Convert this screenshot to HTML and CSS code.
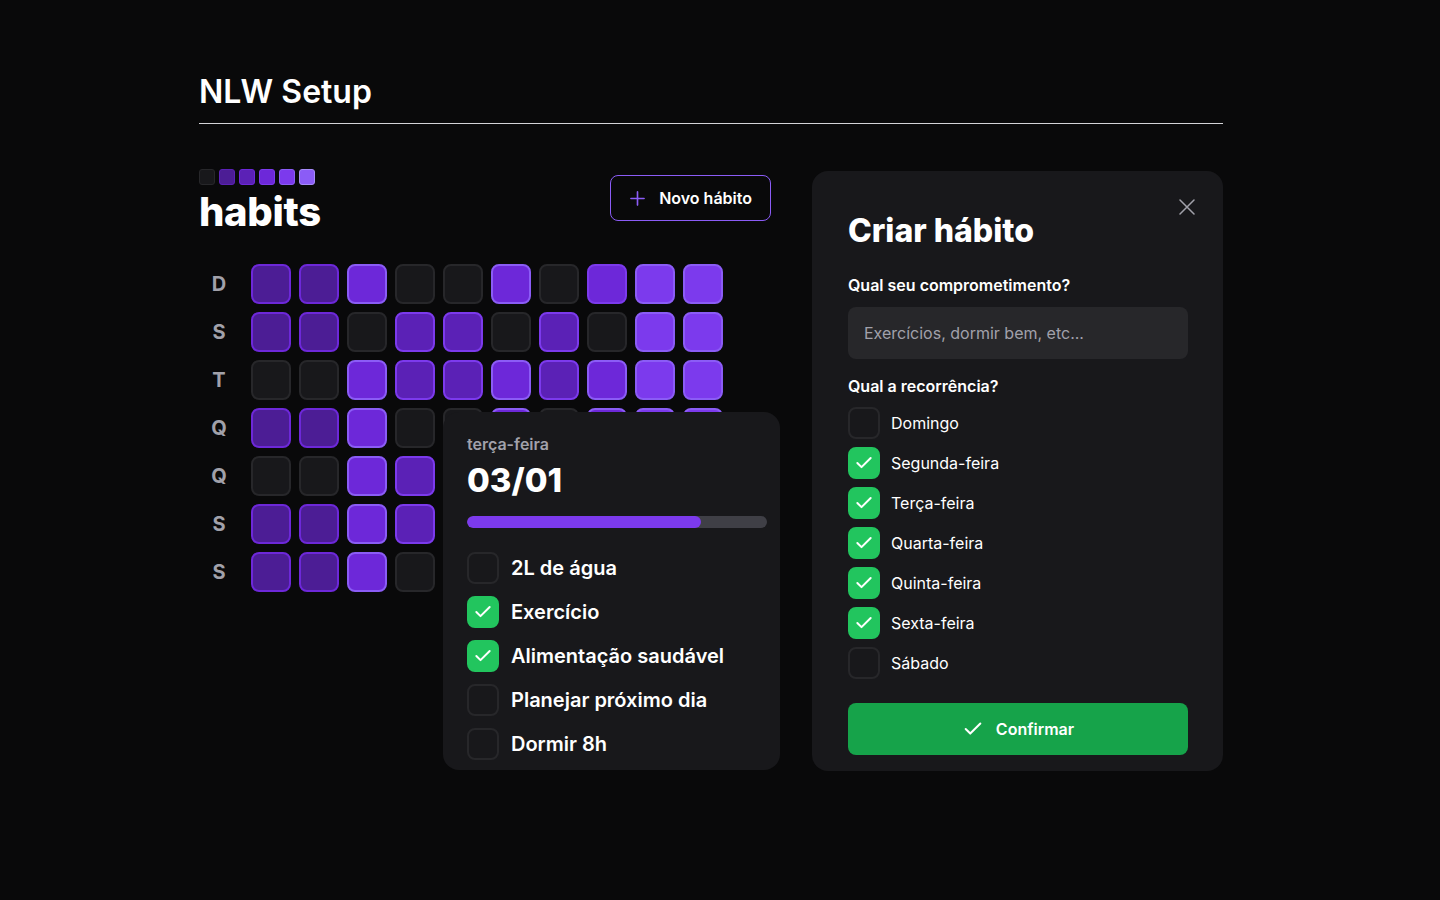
FILE: index.html
```html
<!DOCTYPE html>
<html lang="pt-BR">
<head>
<meta charset="utf-8">
<title>NLW Setup</title>
<link rel="stylesheet" href="styles.css">
</head>
<body>
<div class="page">
  <header class="top-header">
    <h1 class="app-title">NLW Setup</h1>
  </header>

  <main class="main">
    <section class="board">
      <div class="board-head">
        <div class="brand">
          <div class="brand-squares">
            <span class="sq sq-0"></span>
            <span class="sq sq-1"></span>
            <span class="sq sq-2"></span>
            <span class="sq sq-3"></span>
            <span class="sq sq-4"></span>
            <span class="sq sq-5"></span>
          </div>
          <h2 class="brand-name">habits</h2>
        </div>
        <button class="new-btn" type="button">
          <svg class="new-icon" width="15" height="15" viewBox="0 0 16 16" fill="none" stroke="#8b5cf6" stroke-width="1.75" stroke-linecap="round"><path d="M8 1v14M1 8h14"/></svg>
          <span>Novo hábito</span>
        </button>
      </div>

      <div class="summary">
        <div class="week-labels">
          <span>D</span><span>S</span><span>T</span><span>Q</span><span>Q</span><span>S</span><span>S</span>
        </div>
        <div class="cells">
          <span class="c l1"></span><span class="c l1"></span><span class="c l3"></span><span class="c l0"></span><span class="c l0"></span><span class="c l3"></span><span class="c l0"></span><span class="c l3b"></span><span class="c l4"></span><span class="c l4"></span>
          <span class="c l1"></span><span class="c l1"></span><span class="c l0"></span><span class="c l2"></span><span class="c l2"></span><span class="c l0"></span><span class="c l2"></span><span class="c l0"></span><span class="c l4"></span><span class="c l4"></span>
          <span class="c l0"></span><span class="c l0"></span><span class="c l3"></span><span class="c l2"></span><span class="c l2"></span><span class="c l3"></span><span class="c l2"></span><span class="c l3"></span><span class="c l4"></span><span class="c l4"></span>
          <span class="c l1"></span><span class="c l1"></span><span class="c l3"></span><span class="c l0"></span><span class="c l0"></span><span class="c l3"></span><span class="c l0"></span><span class="c l3"></span><span class="c l4"></span><span class="c l4"></span>
          <span class="c l0"></span><span class="c l0"></span><span class="c l3"></span><span class="c l2"></span><span class="c l2"></span><span class="c l3"></span><span class="c l0"></span><span class="c l3"></span><span class="c l4"></span><span class="c l4"></span>
          <span class="c l1"></span><span class="c l1"></span><span class="c l3"></span><span class="c l2"></span><span class="c l0"></span><span class="c l3"></span><span class="c l2"></span><span class="c l0"></span><span class="c l4"></span><span class="c l4"></span>
          <span class="c l1"></span><span class="c l1"></span><span class="c l3"></span><span class="c l0"></span><span class="c l2"></span><span class="c l0"></span><span class="c l3"></span><span class="c l2"></span><span class="c l4"></span><span class="c l4"></span>
        </div>

        <div class="day-popover">
          <span class="day-week">terça-feira</span>
          <span class="day-date">03/01</span>
          <div class="progress"><div class="progress-fill" style="width: 78%"></div></div>
          <ul class="day-list">
            <li class="check-row big"><span class="box"></span><span>2L de água</span></li>
            <li class="check-row big"><span class="box on"><svg width="20" height="20" viewBox="0 0 24 24" fill="none" stroke="#fff" stroke-width="2.4" stroke-linecap="round" stroke-linejoin="round"><path d="M20 6 9 17l-5-5"/></svg></span><span>Exercício</span></li>
            <li class="check-row big"><span class="box on"><svg width="20" height="20" viewBox="0 0 24 24" fill="none" stroke="#fff" stroke-width="2.4" stroke-linecap="round" stroke-linejoin="round"><path d="M20 6 9 17l-5-5"/></svg></span><span>Alimentação saudável</span></li>
            <li class="check-row big"><span class="box"></span><span>Planejar próximo dia</span></li>
            <li class="check-row big"><span class="box"></span><span>Dormir 8h</span></li>
          </ul>
        </div>
      </div>
    </section>

    <section class="modal">
      <button class="close-btn" type="button" aria-label="Fechar">
        <svg width="16" height="16" viewBox="0 0 16 16" fill="none" stroke="#a1a1aa" stroke-width="1.5" stroke-linecap="round"><path d="M1 1l14 14M15 1 1 15"/></svg>
      </button>
      <h3 class="modal-title">Criar hábito</h3>
      <label class="field-label">Qual seu comprometimento?</label>
      <input class="field-input" type="text" placeholder="Exercícios, dormir bem, etc...">
      <label class="field-label second">Qual a recorrência?</label>
      <ul class="week-list">
        <li class="check-row"><span class="box"></span><span>Domingo</span></li>
        <li class="check-row"><span class="box on"><svg width="20" height="20" viewBox="0 0 24 24" fill="none" stroke="#fff" stroke-width="2.4" stroke-linecap="round" stroke-linejoin="round"><path d="M20 6 9 17l-5-5"/></svg></span><span>Segunda-feira</span></li>
        <li class="check-row"><span class="box on"><svg width="20" height="20" viewBox="0 0 24 24" fill="none" stroke="#fff" stroke-width="2.4" stroke-linecap="round" stroke-linejoin="round"><path d="M20 6 9 17l-5-5"/></svg></span><span>Terça-feira</span></li>
        <li class="check-row"><span class="box on"><svg width="20" height="20" viewBox="0 0 24 24" fill="none" stroke="#fff" stroke-width="2.4" stroke-linecap="round" stroke-linejoin="round"><path d="M20 6 9 17l-5-5"/></svg></span><span>Quarta-feira</span></li>
        <li class="check-row"><span class="box on"><svg width="20" height="20" viewBox="0 0 24 24" fill="none" stroke="#fff" stroke-width="2.4" stroke-linecap="round" stroke-linejoin="round"><path d="M20 6 9 17l-5-5"/></svg></span><span>Quinta-feira</span></li>
        <li class="check-row"><span class="box on"><svg width="20" height="20" viewBox="0 0 24 24" fill="none" stroke="#fff" stroke-width="2.4" stroke-linecap="round" stroke-linejoin="round"><path d="M20 6 9 17l-5-5"/></svg></span><span>Sexta-feira</span></li>
        <li class="check-row"><span class="box"></span><span>Sábado</span></li>
      </ul>
      <button class="confirm-btn" type="button">
        <svg width="22" height="22" viewBox="0 0 24 24" fill="none" stroke="#fff" stroke-width="2.2" stroke-linecap="round" stroke-linejoin="round"><path d="M20 6 9 17l-5-5"/></svg>
        <span>Confirmar</span>
      </button>
    </section>
  </main>
</div>
</body>
</html>
```

FILE: styles.css
```css
* { box-sizing: border-box; }

html, body {
  margin: 0;
  padding: 0;
  background: #09090a;
  color: #ffffff;
  font-family: Inter, "Noto Sans", "Liberation Sans", sans-serif;
}

.page {
  width: 1024px;
  margin-left: 199px;
}

.top-header {
  padding-top: 72px;
  padding-bottom: 11px;
  border-bottom: 1px solid #d4d4d8;
}

.app-title {
  margin: 0;
  font-size: 32px;
  line-height: 40px;
  font-weight: 600;
  letter-spacing: 0;
}

.main {
  display: flex;
  align-items: flex-start;
  justify-content: space-between;
  margin-top: 45px;
}

/* ---------- left board ---------- */
.board {
  width: 572px;
}

.board-head {
  display: flex;
  justify-content: space-between;
  align-items: flex-start;
}

.brand-squares {
  display: flex;
  gap: 4px;
}

.sq {
  width: 16px;
  height: 16px;
  border-radius: 3px;
  border: 1px solid;
}
.sq-0 { background: #18181b; border-color: #27272a; }
.sq-1 { background: #4c1d95; border-color: #5b21b6; }
.sq-2 { background: #5b21b6; border-color: #6d28d9; }
.sq-3 { background: #6d28d9; border-color: #7c3aed; }
.sq-4 { background: #7c3aed; border-color: #8b5cf6; }
.sq-5 { background: #8b5cf6; border-color: #a78bfa; }

.brand-name {
  margin: 7px 0 0;
  font-size: 40px;
  line-height: 40px;
  font-weight: 800;
  letter-spacing: -0.3px;
}

.new-btn {
  margin-top: 6px;
  height: 46px;
  display: flex;
  align-items: center;
  gap: 14px;
  padding: 0 18px 0 19px;
  background: transparent;
  border: 1px solid #8b5cf6;
  border-radius: 8px;
  color: #ffffff;
  font-family: inherit;
  font-size: 16px;
  font-weight: 600;
}

.summary {
  position: relative;
  display: flex;
  margin-top: 32px;
}

.week-labels {
  width: 40px;
  margin-right: 12px;
  display: grid;
  grid-template-rows: repeat(7, 40px);
  row-gap: 8px;
}

.week-labels span {
  display: flex;
  align-items: center;
  justify-content: center;
  color: #a1a1aa;
  font-size: 20px;
  font-weight: 700;
}

.cells {
  display: grid;
  grid-template-columns: repeat(10, 40px);
  grid-auto-rows: 40px;
  gap: 8px;
}

.c {
  border-radius: 8px;
  border: 2px solid;
}
.l0 { background: #18181b; border-color: #27272a; }
.l1 { background: #4c1d95; border-color: #6d28d9; }
.l2 { background: #5b21b6; border-color: #7c3aed; }
.l3 { background: #6d28d9; border-color: #8b5cf6; }
.l3b { background: #6d28d9; border-color: #7c3aed; }
.l4 { background: #7c3aed; border-color: #8b5cf6; }

/* popover over the grid */
.day-popover {
  position: absolute;
  top: 148px;
  left: 244px;
  width: 337px;
  padding: 20px 13px 10px 24px;
  background: #18181b;
  border-radius: 16px;
  display: flex;
  flex-direction: column;
}

.day-week {
  color: #a1a1aa;
  font-size: 16px;
  line-height: 24px;
  font-weight: 600;
}

.day-date {
  margin-top: 4px;
  font-size: 33px;
  line-height: 40px;
  font-weight: 800;
}

.progress {
  margin-top: 16px;
  height: 12px;
  width: 300px;
  background: #3f3f46;
  border-radius: 999px;
  overflow: hidden;
}

.progress-fill {
  height: 100%;
  background: #7c3aed;
  border-radius: 999px;
}

.day-list,
.week-list {
  list-style: none;
  margin: 0;
  padding: 0;
  display: flex;
  flex-direction: column;
}

.day-list {
  margin-top: 24px;
  gap: 12px;
}

.check-row {
  display: flex;
  align-items: center;
  gap: 12px;
  font-size: 16px;
  line-height: 24px;
  color: #ffffff;
}

.week-list .check-row {
  gap: 11px;
}

.check-row.big {
  font-size: 20px;
  font-weight: 600;
  line-height: 28px;
}

.box {
  width: 32px;
  height: 32px;
  flex: none;
  border-radius: 8px;
  background: #18181b;
  border: 2px solid #27272a;
  display: flex;
  align-items: center;
  justify-content: center;
}

.box.on {
  background: #22c55e;
  border-color: #22c55e;
}

/* ---------- modal ---------- */
.modal {
  position: relative;
  width: 411px;
  margin-top: 2px;
  padding: 40px 35px 16px 36px;
  background: #18181b;
  border-radius: 16px;
  display: flex;
  flex-direction: column;
}

.close-btn {
  position: absolute;
  top: 28px;
  right: 28px;
  width: 16px;
  height: 16px;
  padding: 0;
  border: 0;
  background: transparent;
  display: flex;
}

.modal-title {
  margin: 0;
  font-size: 32px;
  line-height: 40px;
  font-weight: 800;
}

.field-label {
  margin-top: 22px;
  font-size: 16px;
  line-height: 24px;
  font-weight: 600;
}

.field-label.second {
  margin-top: 15px;
}

.field-input {
  margin-top: 10px;
  height: 52px;
  width: 100%;
  padding: 0 16px;
  border: 0;
  border-radius: 8px;
  background: #27272a;
  color: #ffffff;
  font-family: inherit;
  font-size: 16px;
  outline: none;
}

.field-input::placeholder {
  color: #a1a1aa;
}

.week-list {
  margin-top: 9px;
  gap: 8px;
}

.confirm-btn {
  margin-top: 24px;
  height: 52px;
  width: 100%;
  display: flex;
  align-items: center;
  justify-content: center;
  gap: 12px;
  border: 0;
  border-radius: 8px;
  background: #16a34a;
  color: #ffffff;
  font-family: inherit;
  font-size: 16px;
  font-weight: 600;
}
```
